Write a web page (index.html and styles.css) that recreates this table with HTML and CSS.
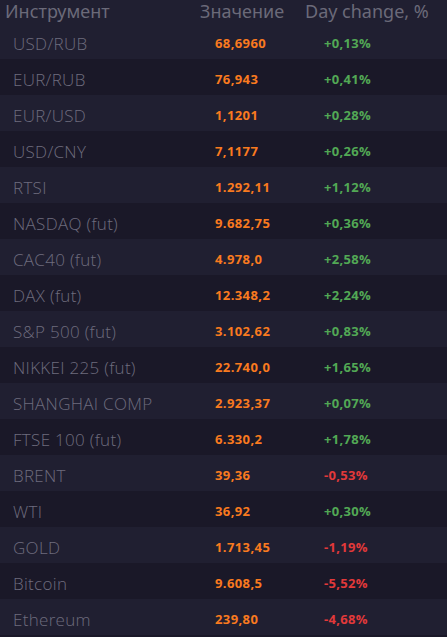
FILE: index.html
```html
<!DOCTYPE html>
<html>
<head>
<meta charset="utf-8">
<link rel="stylesheet" href="styles.css">
</head>
<body>
<div class="table">
  <div class="head">
    <div class="h-name">Инструмент</div>
    <div class="h-value">Значение</div>
    <div class="h-change">Day change, %</div>
  </div>
  <div class="row odd"><div class="name">USD/RUB</div><div class="value">68,6960</div><div class="change up">+0,13%</div></div>
  <div class="row even"><div class="name">EUR/RUB</div><div class="value">76,943</div><div class="change up">+0,41%</div></div>
  <div class="row odd"><div class="name">EUR/USD</div><div class="value">1,1201</div><div class="change up">+0,28%</div></div>
  <div class="row even"><div class="name">USD/CNY</div><div class="value">7,1177</div><div class="change up">+0,26%</div></div>
  <div class="row odd"><div class="name">RTSI</div><div class="value">1.292,11</div><div class="change up">+1,12%</div></div>
  <div class="row even"><div class="name">NASDAQ (fut)</div><div class="value">9.682,75</div><div class="change up">+0,36%</div></div>
  <div class="row odd"><div class="name">CAC40 (fut)</div><div class="value">4.978,0</div><div class="change up">+2,58%</div></div>
  <div class="row even"><div class="name">DAX (fut)</div><div class="value">12.348,2</div><div class="change up">+2,24%</div></div>
  <div class="row odd"><div class="name">S&amp;P 500 (fut)</div><div class="value">3.102,62</div><div class="change up">+0,83%</div></div>
  <div class="row even"><div class="name">NIKKEI 225 (fut)</div><div class="value">22.740,0</div><div class="change up">+1,65%</div></div>
  <div class="row odd"><div class="name">SHANGHAI COMP</div><div class="value">2.923,37</div><div class="change up">+0,07%</div></div>
  <div class="row even"><div class="name">FTSE 100 (fut)</div><div class="value">6.330,2</div><div class="change up">+1,78%</div></div>
  <div class="row odd"><div class="name">BRENT</div><div class="value">39,36</div><div class="change down">-0,53%</div></div>
  <div class="row even"><div class="name">WTI</div><div class="value">36,92</div><div class="change up">+0,30%</div></div>
  <div class="row odd"><div class="name">GOLD</div><div class="value">1.713,45</div><div class="change down">-1,19%</div></div>
  <div class="row even"><div class="name">Bitcoin</div><div class="value">9.608,5</div><div class="change down">-5,52%</div></div>
  <div class="row odd"><div class="name">Ethereum</div><div class="value">239,80</div><div class="change down">-4,68%</div></div>
</div>
</body>
</html>
```
FILE: styles.css
```css
html, body {
  margin: 0;
  padding: 0;
  background: #1a1828;
}
.table {
  width: 447px;
  height: 637px;
  overflow: hidden;
  background: #1a1828;
}
.head {
  display: grid;
  grid-template-columns: 195px 105px 1fr;
  height: 23px;
  align-items: center;
  background: #201f31;
  font-family: "Noto Sans", sans-serif;
  font-size: 18px;
  color: #6b6a79;
  padding-left: 5px;
  box-sizing: border-box;
  line-height: 23px;
}
.h-name, .h-value, .h-change { white-space: nowrap; }
.row {
  display: grid;
  grid-template-columns: 202px 109px 1fr;
  height: 36px;
  align-items: center;
  padding-left: 13px;
  padding-top: 4px;
  box-sizing: border-box;
}
.odd { background: #201f31; }
.even { background: #1a1828; }
.name {
  font-family: "Open Sans", sans-serif;
  font-weight: 300;
  font-size: 17px;
  letter-spacing: 0.3px;
  color: #6e6c7e;
  white-space: nowrap;
}
.value {
  font-family: "Open Sans", sans-serif;
  font-weight: 700;
  font-size: 13px;
  letter-spacing: 0.4px;
  color: #f97a1f;
}
.change {
  font-family: "Open Sans", sans-serif;
  font-weight: 700;
  font-size: 13px;
  letter-spacing: 0.3px;
}
.up { color: #52a855; }
.down { color: #e2393a; }
```
